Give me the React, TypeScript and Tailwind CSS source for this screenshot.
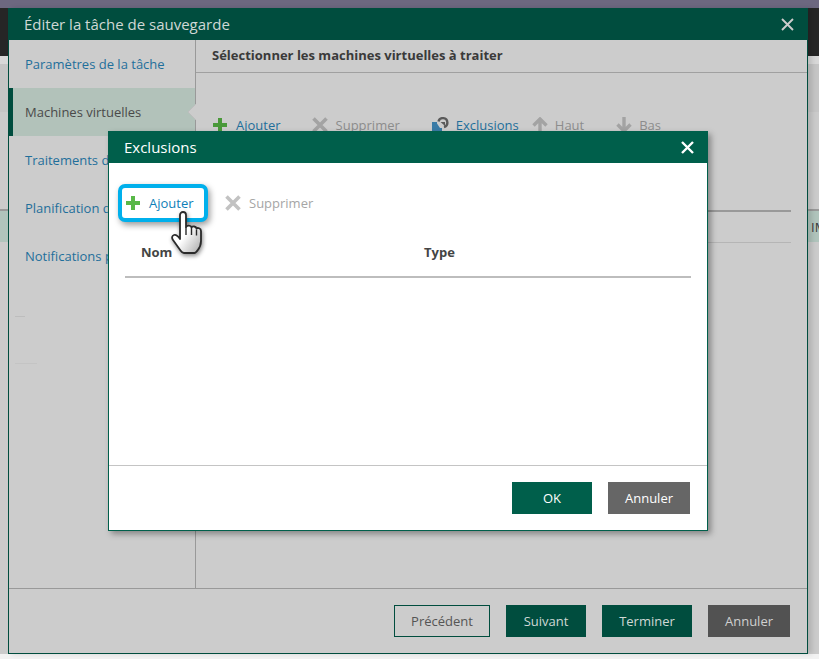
const font = { fontFamily: '"Open Sans", sans-serif' };

function PlusIcon({ className }: { className: string }) {
  return (
    <svg viewBox="0 0 14 14" className={className}>
      <path d="M5 0h4v5h5v4H9v5H5V9H0V5h5z" fill="currentColor" />
    </svg>
  );
}

function CrossIcon({ className }: { className: string }) {
  return (
    <svg viewBox="0 0 16 16" className={className}>
      <path d="M1.500 1.500 14.500 14.500M14.500 1.500 1.500 14.500" stroke="currentColor" strokeWidth="3.6" fill="none" />
    </svg>
  );
}

function CloseIcon({ className, bold }: { className: string; bold?: boolean }) {
  return (
    <svg viewBox="0 0 13 13" className={className}>
      <path d="M1 1 12 12M12 1 1 12" stroke="currentColor" strokeWidth={bold ? 2.4 : 1.9} fill="none" />
    </svg>
  );
}

function ExclusionsIcon() {
  return (
    <svg viewBox="0 0 17 16" className="w-[17px] h-4 shrink-0">
      <path d="M0 5h5v1.500L8 11h2v5H0z" fill="#3a7ba6" />
      <path d="M6.500 4.500A4.500 4.500 0 1 1 12 10" stroke="#5a5a5a" strokeWidth="2.400" fill="none" />
      <path d="M8.500 5h4.500v4z" fill="#5a5a5a" />
    </svg>
  );
}

function ArrowIcon({ down }: { down?: boolean }) {
  return (
    <svg viewBox="0 0 16 16" className={`w-4 h-4 shrink-0 text-[#a3a3a3] ${down ? 'rotate-180' : ''}`}>
      <path d="M8 2v14M1.500 8.500 8 2l6.500 6.500" stroke="currentColor" strokeWidth="3.400" fill="none" />
    </svg>
  );
}

function HandCursor() {
  return (
    <svg viewBox="0 0 32 46" className="absolute left-[171px] top-[210px] w-8 h-[46px] drop-shadow-[1px_2px_2px_rgba(0,0,0,0.45)]">
      <defs>
        <linearGradient id="hand" x1="0" y1="0" x2="1" y2="1">
          <stop offset="0" stopColor="#ffffff" />
          <stop offset="0.5" stopColor="#ffffff" />
          <stop offset="1" stopColor="#a8a8a8" />
        </linearGradient>
      </defs>
      <path
        d="M9 5a3 3 0 0 1 6 0v12c1-2 5-2 5.500 0.500 1-1.500 4.500-1.500 5 1 1-1 4.500-0.500 4.500 2.500v10c0 4-1.500 7-3.500 9.500-1 1-2 2.500-3 2.500H13c-1.500 0-2.500-1-3.500-2.500L2 30c-1.500-2-1-4.500 1-5s4 1 6 4z"
        fill="url(#hand)"
        stroke="#2a2a2a"
        strokeWidth="1.800"
        strokeLinejoin="round"
      />
      <path d="M15 17v8M20.500 18v7M25.500 19.500v6" stroke="#2a2a2a" strokeWidth="1.400" fill="none" />
    </svg>
  );
}

function NavItem({ label, active }: { label: string; active?: boolean }) {
  if (active) {
    return (
      <div className="relative h-12 flex items-center pl-3 pt-[2px] border-l-4 border-[#004d3e] bg-[#b2c2ba] text-[#4a4a4a] whitespace-nowrap">
        {label}
        <svg viewBox="0 0 9 16" className="absolute right-[-1px] top-4 w-[9px] h-4">
          <path d="M9 0 1 8l8 8z" fill="#cccccc" />
          <path d="M9 0 1 8l8 8" stroke="#bdbdbd" fill="none" />
        </svg>
      </div>
    );
  }
  return <div className="h-12 flex items-center pl-4 pt-[2px] text-[#1f6f9b] whitespace-nowrap">{label}</div>;
}

export default function App() {
  return (
    <div className="relative w-[823px] h-[659px] overflow-hidden bg-white text-[13px]" style={font}>
      {/* page behind the dialogs */}
      <div className="w-[819px] h-[659px] flex flex-col bg-[#cbcbcb]">
        <div className="h-2 bg-[#6d6880]" />
        <div className="h-12 bg-[#262626]" />
        <div className="h-2 bg-[#d8d8d8]" />
        <div className="h-12 bg-[#c5c5c5]" />
        <div className="h-[97px]" />
        <div className="h-[33px] border-t-2 border-[#999999] bg-[#b0c4bc] pl-[811px] pt-[2px] flex items-center text-[#3a3a3a] overflow-hidden whitespace-nowrap">
          IM
        </div>
        <div className="flex-1" />
        <div className="h-[5px] bg-[#f2f2f2]" />
      </div>

      {/* job wizard */}
      <div className="absolute left-2 top-2 w-[800px] h-[646px] flex flex-col bg-[#cccccc] border-x border-b border-[#004d3e] shadow-[4px_0_5px_rgba(0,0,0,0.12)]">
        <div className="h-8 -mx-px shrink-0 flex items-center justify-between pl-4 pr-[14px] bg-[#004d3e] text-[15px] text-[#cfd8d5]">
          <span>Éditer la tâche de sauvegarde</span>
          <CloseIcon className="w-[13px] h-[13px] text-[#cccccc]" />
        </div>
        <div className="flex-1 flex min-h-0">
          <div className="w-[187px] shrink-0 border-r border-[#999999]">
            <NavItem label="Paramètres de la tâche" />
            <NavItem label="Machines virtuelles" active />
            <NavItem label="Traitements des invités" />
            <NavItem label="Planification de la tâche" />
            <NavItem label="Notifications par e-mail" />
            <div className="mt-[36px] ml-[6px] w-[10px] h-px bg-[#bdbdbd]" />
            <div className="mt-[46px] ml-[6px] w-[22px] h-px bg-[#c4c4c4]" />
          </div>
          <div className="flex-1 min-w-0">
            <div className="h-[33px] flex items-center pl-4 border-b border-[#a0a0a0] font-bold text-[#3a3a3a]">
              Sélectionner les machines virtuelles à traiter
            </div>
            <div className="h-[137px] pl-[17px] pt-[44px] flex items-start">
              <div className="h-4 flex items-center text-[#1f6f9b]">
                <PlusIcon className="w-[14px] h-[14px] text-[#4a993a]" />
                <span className="ml-[9px] pt-[2px]">Ajouter</span>
              </div>
              <div className="h-4 ml-[31px] flex items-center text-[#8c8c8c]">
                <CrossIcon className="w-4 h-4 text-[#a3a3a3]" />
                <span className="ml-2 pt-[2px]">Supprimer</span>
              </div>
              <div className="h-4 ml-8 flex items-center text-[#1f6f9b]">
                <ExclusionsIcon />
                <span className="ml-[7px] pt-[2px]">Exclusions</span>
              </div>
              <div className="h-4 ml-[13px] flex items-center text-[#8c8c8c]">
                <ArrowIcon />
                <span className="ml-[7px] pt-[2px]">Haut</span>
              </div>
              <div className="h-4 ml-8 flex items-center text-[#8c8c8c]">
                <ArrowIcon down />
                <span className="ml-[7px] pt-[2px]">Bas</span>
              </div>
            </div>
            <div className="ml-4 mr-4 h-[33px] border-t-2 border-b border-t-[#999999] border-b-[#b5b5b5]" />
          </div>
        </div>
        <div className="h-[65px] shrink-0 flex justify-end items-start gap-4 pt-4 pr-[17px] border-t border-[#999999]">
          <button className="w-24 h-8 pt-[2px] border border-[#004d3e] text-[#555555]">Précédent</button>
          <button className="w-20 h-8 pt-[2px] bg-[#004d3e] text-[#cfd8d5]">Suivant</button>
          <button className="w-[90px] h-8 pt-[2px] bg-[#004d3e] text-[#cfd8d5]">Terminer</button>
          <button className="w-[82px] h-8 pt-[2px] bg-[#525252] text-[#d0d0d0]">Annuler</button>
        </div>
      </div>

      {/* exclusions dialog */}
      <div className="absolute left-[108px] top-[131px] w-[600px] h-[400px] flex flex-col bg-white border-x border-b border-[#005f4b] shadow-[3px_3px_6px_rgba(0,0,0,0.35)]">
        <div className="h-8 -mx-px shrink-0 flex items-center justify-between pl-4 pr-[14px] bg-[#005f4b] text-[15px] text-white">
          <span>Exclusions</span>
          <CloseIcon bold className="w-[13px] h-[13px] text-white" />
        </div>
        <div className="flex-1 min-h-0 flex flex-col">
          <div className="flex items-center mt-[21px] ml-[9px]">
            <div className="w-[90px] h-[38px] flex items-center pl-[4px] border-4 border-[#00b0ec] rounded-[7px] bg-white text-[#0e7fb8] shadow-[2px_3px_6px_rgba(0,0,0,0.4)]">
              <PlusIcon className="w-[14px] h-[14px] text-[#59b848]" />
              <span className="ml-[9px] pt-[2px]">Ajouter</span>
            </div>
            <div className="ml-[17px] flex items-center text-[#a6a6a6]">
              <CrossIcon className="w-4 h-4 text-[#c2c2c2]" />
              <span className="ml-2 pt-[2px]">Supprimer</span>
            </div>
          </div>
          <div className="mx-4 mt-[16px] h-[40px] flex items-start pt-[5px] border-b-2 border-[#bdbdbd] font-bold text-[#444444]">
            <span className="w-[299px] pl-4">Nom</span>
            <span>Type</span>
          </div>
        </div>
        <div className="h-[65px] shrink-0 flex justify-end items-start gap-4 pt-4 pr-[17px] border-t border-[#c4c4c4]">
          <button className="w-20 h-8 pt-[2px] bg-[#005f4b] text-white">OK</button>
          <button className="w-[82px] h-8 pt-[2px] bg-[#666666] text-white">Annuler</button>
        </div>
      </div>

      <HandCursor />
    </div>
  );
}
